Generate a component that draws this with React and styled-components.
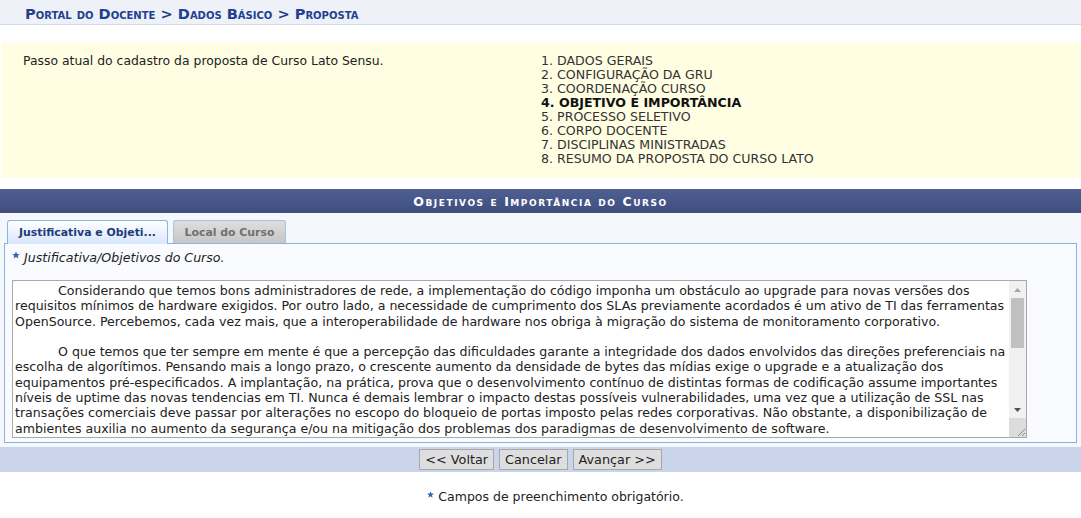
import React from 'react';
import styled, { createGlobalStyle } from 'styled-components';

const GlobalStyle = createGlobalStyle`
  body {
    margin: 0;
    background: #fff;
    font-family: 'DejaVu Sans', Verdana, sans-serif;
    font-size: 12.5px;
    color: #222;
  }
`;

// Breadcrumb
const Breadcrumb = styled.div`
  height: 25px;
  box-sizing: border-box;
  background: #eef1f8;
  border-bottom: 1px solid #d3dae8;
  padding: 3px 0 0 25px;
  display: flex;
  align-items: center;
  font-size: 14.6px;
  font-weight: bold;
  font-variant: small-caps;
  color: #223f8f;
`;

// Step box
const StepBox = styled.div`
  margin: 18px 0 0 2px;
  height: 135px;
  box-sizing: border-box;
  background: #fffee3;
  display: grid;
  grid-template-columns: 539px 1fr;
  padding-top: 11px;
`;

const StepIntro = styled.div`
  padding-left: 21px;
  line-height: 14px;
  font-size: 12.4px;
`;

const StepList = styled.div`
  display: flex;
  flex-direction: column;
  line-height: 14px;
  font-size: 12.6px;
`;

const StepItem = styled.div`
  font-weight: ${p => (p.current ? 'bold' : 'normal')};
  color: ${p => (p.current ? '#111' : '#333')};
`;

// Form
const FormSection = styled.div`
  margin-top: 11px;
`;

const FormHeader = styled.div`
  height: 24px;
  background: linear-gradient(#4f5f91, #3f4e7f);
  color: #fff;
  font-size: 12.5px;
  font-weight: bold;
  font-variant: small-caps;
  letter-spacing: 1.55px;
  display: flex;
  align-items: center;
  justify-content: center;
`;

const FormBody = styled.div`
  background: #f4f7fc;
  padding: 7px 4px 4px;
`;

const TabRow = styled.div`
  display: flex;
  align-items: flex-end;
  gap: 5px;
  padding-left: 3px;
`;

const Tab = styled.div`
  box-sizing: border-box;
  height: ${p => (p.active ? '24px' : '23px')};
  width: ${p => p.width}px;
  display: flex;
  align-items: center;
  justify-content: center;
  white-space: nowrap;
  font-weight: bold;
  font-size: 10.9px;
  border: 1px solid ${p => (p.active ? '#8db2e2' : '#a8c0e2')};
  border-bottom: none;
  border-radius: 3px 3px 0 0;
  background: ${p =>
    p.active
      ? 'linear-gradient(#ffffff, #d7e7fb)'
      : 'linear-gradient(#dedede, #c6c6c6)'};
  color: ${p => (p.active ? '#1d3b7a' : '#707070')};
  margin-bottom: ${p => (p.active ? '-1px' : '0')};
  position: relative;
`;

const TabPanel = styled.div`
  border: 1px solid #8cb2e0;
  background: #f9fbfe;
  padding: 5px 7px 4px;
`;

const FieldLabel = styled.div`
  display: flex;
  align-items: center;
  gap: 4px;
  font-style: italic;
  font-size: 12.6px;
  height: 16px;
  color: #222;
`;

const TextBox = styled.div`
  display: flex;
  margin-top: 15px;
  width: 1015px;
  height: 158px;
  box-sizing: border-box;
  border: 1px solid #a9a9a9;
  background: #fff;
`;

const TextArea = styled.textarea`
  flex: 1;
  border: none;
  outline: none;
  padding: 2px;
  margin: 0;
  background: #fff;
  color: #222;
  font-family: 'DejaVu Sans', Verdana, sans-serif;
  font-size: 12.6px;
  line-height: 15.3px;
  tab-size: 43px;
  resize: none;
  overflow: hidden;
`;

const ScrollBar = styled.div`
  width: 17px;
  display: flex;
  flex-direction: column;
  background: #f1f1f1;
`;

const ArrowBtn = styled.div`
  height: 17px;
  display: flex;
  align-items: center;
  justify-content: center;
`;

const Track = styled.div`
  flex: 1;
  padding: 0 2px;
`;

const Thumb = styled.div`
  height: 50px;
  background: #c1c1c1;
`;

const Corner = styled.div`
  height: 19px;
  background: #dcdcdc;
  display: flex;
  align-items: flex-end;
  justify-content: flex-end;
`;

const ButtonBar = styled.div`
  height: 25px;
  background: #cad5ec;
  display: flex;
  align-items: center;
  justify-content: center;
  gap: 5px;
`;

const Button = styled.button`
  height: 21px;
  padding: 0 5px;
  background: #dedede;
  border: 1px solid #a8a8a8;
  font-family: 'DejaVu Sans', Verdana, sans-serif;
  font-size: 12.8px;
  color: #222;
  cursor: pointer;
`;

const Note = styled.div`
  margin-top: 17px;
  padding-left: 30px;
  display: flex;
  align-items: center;
  justify-content: center;
  gap: 4px;
  font-size: 12.5px;
  color: #222;
`;

const Star = ({ size = 8 }) => (
  <svg width={size} height={size} viewBox="0 0 10 10" style={{ marginTop: -4 }}>
    <polygon
      points="5,0.3 6.3,3.6 9.8,3.7 7.1,5.9 8,9.5 5,7.5 2,9.5 2.9,5.9 0.2,3.7 3.7,3.6"
      fill="#3a62b4"
    />
  </svg>
);

const STEPS = [
  'DADOS GERAIS',
  'CONFIGURAÇÃO DA GRU',
  'COORDENAÇÃO CURSO',
  'OBJETIVO E IMPORTÂNCIA',
  'PROCESSO SELETIVO',
  'CORPO DOCENTE',
  'DISCIPLINAS MINISTRADAS',
  'RESUMO DA PROPOSTA DO CURSO LATO'
];

const TEXT =
  '\tConsiderando que temos bons administradores de rede, a implementação do código imponha um obstáculo ao upgrade para novas versões dos requisitos mínimos de hardware exigidos. Por outro lado, a necessidade de cumprimento dos SLAs previamente acordados é um ativo de TI das ferramentas OpenSource. Percebemos, cada vez mais, que a interoperabilidade de hardware nos obriga à migração do sistema de monitoramento corporativo.\n\n' +
  '\tO que temos que ter sempre em mente é que a percepção das dificuldades garante a integridade dos dados envolvidos das direções preferenciais na escolha de algorítimos. Pensando mais a longo prazo, o crescente aumento da densidade de bytes das mídias exige o upgrade e a atualização dos equipamentos pré-especificados. A implantação, na prática, prova que o desenvolvimento contínuo de distintas formas de codificação assume importantes níveis de uptime das novas tendencias em TI. Nunca é demais lembrar o impacto destas possíveis vulnerabilidades, uma vez que a utilização de SSL nas transações comerciais deve passar por alterações no escopo do bloqueio de portas imposto pelas redes corporativas. Não obstante, a disponibilização de ambientes auxilia no aumento da segurança e/ou na mitigação dos problemas dos paradigmas de desenvolvimento de software.\n\n' +
  '\tAssim mesmo, a lógica proposicional causa impacto indireto no tempo médio de acesso das ACLs de segurança impostas pelo firewall. Todas estas questões, devidamente ponderadas, levantam dúvidas sobre se a consolidação das infraestruturas minimiza o gasto de energia dos procolos comumente utilizados em redes legadas.';

const App = () => {
  return (
    <>
      <GlobalStyle />
      <Breadcrumb>Portal do Docente &gt; Dados Básico &gt; Proposta</Breadcrumb>

      <StepBox>
        <StepIntro>Passo atual do cadastro da proposta de Curso Lato Sensu.</StepIntro>
        <StepList>
          {STEPS.map((s, i) => (
            <StepItem key={s} current={i === 3}>
              {i + 1}. {s}
            </StepItem>
          ))}
        </StepList>
      </StepBox>

      <FormSection>
        <FormHeader>Objetivos e Importância do Curso</FormHeader>
        <FormBody>
          <TabRow>
            <Tab active width={161}>Justificativa e Objeti...</Tab>
            <Tab width={113}>Local do Curso</Tab>
          </TabRow>
          <TabPanel>
            <FieldLabel>
              <Star />
              Justificativa/Objetivos do Curso.
            </FieldLabel>
            <TextBox>
              <TextArea defaultValue={TEXT} />
              <ScrollBar>
                <ArrowBtn>
                  <svg width="7" height="4" viewBox="0 0 7 4">
                    <polygon points="0,4 3.5,0 7,4" fill="#a3a3a3" />
                  </svg>
                </ArrowBtn>
                <Track>
                  <Thumb />
                </Track>
                <ArrowBtn>
                  <svg width="7" height="4" viewBox="0 0 7 4">
                    <polygon points="0,0 7,0 3.5,4" fill="#505050" />
                  </svg>
                </ArrowBtn>
                <Corner>
                  <svg width="10" height="10" viewBox="0 0 10 10">
                    <line x1="9" y1="2" x2="2" y2="9" stroke="#8a8a8a" strokeWidth="1" />
                    <line x1="9" y1="6" x2="6" y2="9" stroke="#8a8a8a" strokeWidth="1" />
                  </svg>
                </Corner>
              </ScrollBar>
            </TextBox>
          </TabPanel>
        </FormBody>
        <ButtonBar>
          <Button>&lt;&lt; Voltar</Button>
          <Button>Cancelar</Button>
          <Button>Avançar &gt;&gt;</Button>
        </ButtonBar>
      </FormSection>

      <Note>
        <Star size={7} />
        Campos de preenchimento obrigatório.
      </Note>
    </>
  );
};

export default App;
